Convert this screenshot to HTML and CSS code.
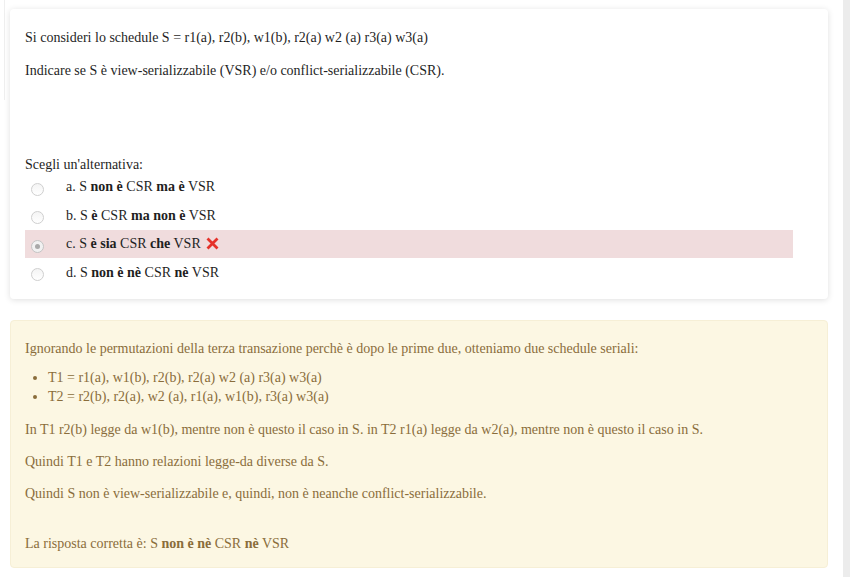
FILE: index.html
```html
<!DOCTYPE html>
<html lang="it">
<head>
<meta charset="utf-8">
<title>Quiz</title>
<link rel="stylesheet" href="styles.css">
</head>
<body>
<div class="page">
  <div class="left-edge"></div>
  <main class="content">
    <section class="card question">
      <p class="qtext">Si consideri lo schedule S = r1(a), r2(b), w1(b), r2(a) w2 (a) r3(a) w3(a)</p>
      <p class="qtext second">Indicare se S è view-serializzabile (VSR) e/o conflict-serializzabile (CSR).</p>
      <div class="prompt">Scegli un'alternativa:</div>
      <div class="answers">
        <div class="answer">
          <span class="radio"></span>
          <span class="label">a. S <b>non è</b> CSR <b>ma è</b> VSR</span>
        </div>
        <div class="answer">
          <span class="radio"></span>
          <span class="label">b. S <b>è</b> CSR <b>ma non è</b> VSR</span>
        </div>
        <div class="answer incorrect">
          <span class="radio checked"></span>
          <span class="label">c. S <b>è sia</b> CSR <b>che</b> VSR</span>
          <svg class="xmark" width="13" height="13" viewBox="0 0 13 13" aria-hidden="true"><path d="M1.5 1.5 L11.5 11.5 M11.5 1.5 L1.5 11.5" stroke="#e5322a" stroke-width="2.8" fill="none"/></svg>
        </div>
        <div class="answer">
          <span class="radio"></span>
          <span class="label">d. S <b>non è nè</b> CSR <b>nè</b> VSR</span>
        </div>
      </div>
    </section>
    <section class="card feedback">
      <p class="intro">Ignorando le permutazioni della terza transazione perchè è dopo le prime due, otteniamo due schedule seriali:</p>
      <ul class="orders">
        <li>T1 = r1(a), w1(b), r2(b), r2(a) w2 (a) r3(a) w3(a)</li>
        <li>T2 = r2(b), r2(a), w2 (a), r1(a), w1(b), r3(a) w3(a)</li>
      </ul>
      <p>In T1 r2(b) legge da w1(b), mentre non è questo il caso in S. in T2 r1(a) legge da w2(a), mentre non è questo il caso in S.</p>
      <p>Quindi T1 e T2 hanno relazioni legge-da diverse da S.</p>
      <p>Quindi S non è view-serializzabile e, quindi, non è neanche conflict-serializzabile.</p>
      <p class="right-answer">La risposta corretta è: S <b>non è nè</b> CSR <b>nè</b> VSR</p>
    </section>
  </main>
  <div class="right-edge"></div>
</div>
</body>
</html>
```
FILE: styles.css
```css
html, body {
  margin: 0;
  padding: 0;
  background: #ffffff;
}

body {
  font-family: "Liberation Serif", "Times New Roman", serif;
  font-size: 14px;
  color: #1f1f1f;
}

.page {
  display: flex;
  min-height: 577px;
}

.left-edge {
  width: 4px;
  height: 100px;
  border-right: 1px solid #efefef;
  flex: none;
}

.content {
  flex: 1;
  padding: 9px 15px 0 5px;
  min-width: 0;
}

.right-edge {
  width: 7px;
  flex: none;
  background: #ececec;
}

.card {
  border-radius: 4px;
}

.question {
  background: #fff;
  box-shadow: 0 1px 6px rgba(0, 0, 0, 0.13);
  padding: 19px 15px 12px 15px;
}

.qtext {
  margin: 0 0 14px 0;
  line-height: 19px;
}

.qtext.second {
  margin-bottom: 77px;
}

.prompt {
  line-height: 16px;
}

.answers {
  margin-right: 20px;
}

.answer {
  display: flex;
  align-items: center;
  height: 28px;
  line-height: 28px;
  margin-bottom: 0.5px;
}

.answer.incorrect {
  background: #f0dcdd;
}

.radio {
  flex: none;
  box-sizing: border-box;
  width: 13px;
  height: 13px;
  border-radius: 50%;
  border: 1px solid #cfcfcf;
  background: linear-gradient(#f4f4f4, #ffffff);
  margin: 4px 22px 0 6px;
  display: flex;
  align-items: center;
  justify-content: center;
}

.radio.checked {
  background: #f1f1f1;
  border-color: #c4c4c4;
}

.radio.checked::after {
  content: "";
  width: 5px;
  height: 5px;
  border-radius: 50%;
  background: #a9a9a9;
}

.label b {
  font-weight: bold;
}

.xmark {
  margin-left: 5px;
  margin-top: -2px;
}

.feedback {
  margin-top: 21px;
  background: #fcf7e3;
  border: 1px solid #f6efd6;
  color: #8a6d3b;
  padding: 18px 14px 14px 14px;
}

.feedback p {
  margin: 0 0 13px 0;
  line-height: 19px;
}

.feedback p.intro {
  margin-bottom: 10px;
}

.orders {
  margin: 0 0 14px 0;
  padding-left: 23px;
  line-height: 19px;
}

.feedback p.right-answer {
  margin: 31px 0 0 0;
}
```
